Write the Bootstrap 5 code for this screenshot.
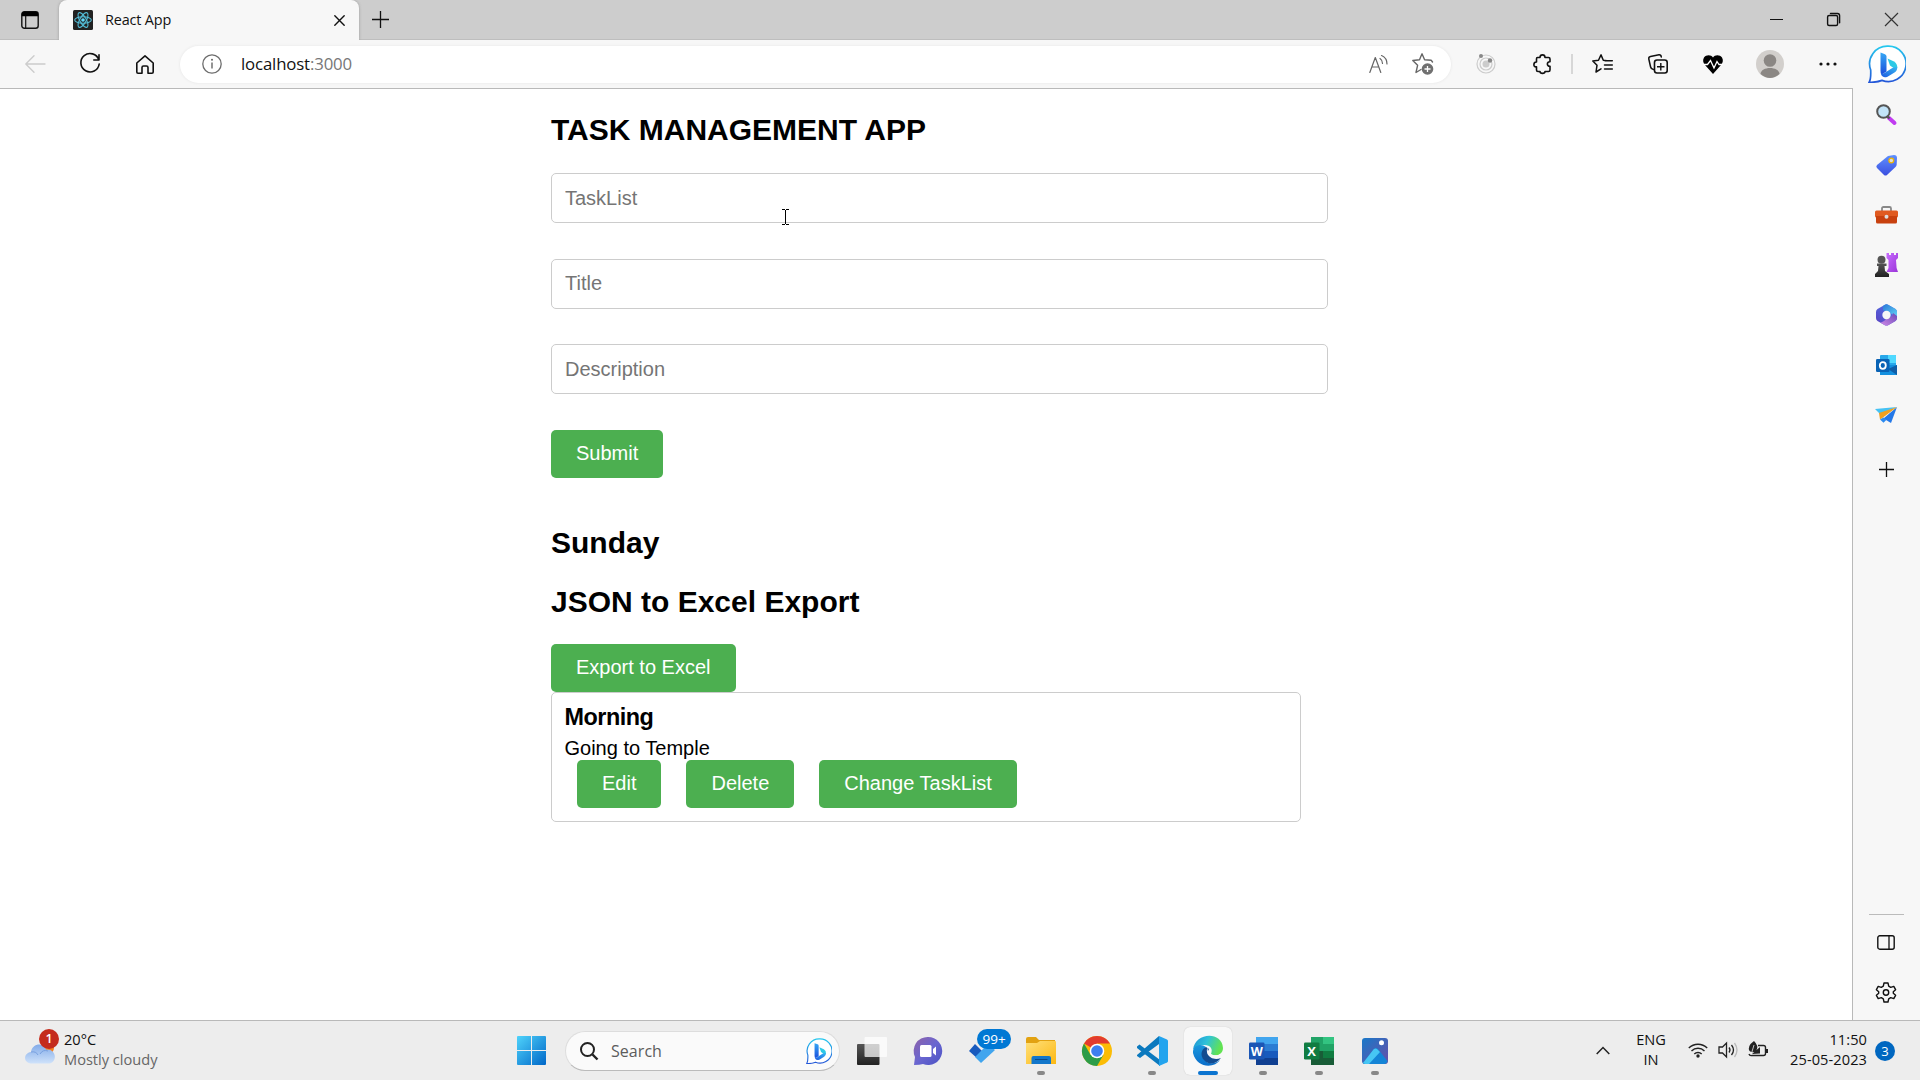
<!DOCTYPE html>
<html lang="en">
<head>
<meta charset="utf-8">
<title>React App</title>
<link href="https://cdn.jsdelivr.net/npm/bootstrap@5.3.0/dist/css/bootstrap.min.css" rel="stylesheet">
<style>
:root{--chrome:#f7f7f7;--line:#b9b9b9}
body{width:1920px;height:1080px;overflow:hidden;font-family:"Open Sans","Noto Sans",sans-serif;color:#111;background:#fff}
svg{display:block;flex:none;overflow:visible}
.cell{display:flex;align-items:center;justify-content:center;flex:none;width:55px}
.ln{fill:none;stroke:#111;stroke-width:1.4;stroke-linecap:round;stroke-linejoin:round}
.strip{height:40px;background:#cdcdcd;border-bottom:1px solid #bebebe}
.strip .cell{height:39px}
.tabbox{width:300px;height:40px;background:var(--chrome);border-radius:8px 8px 0 0;padding-left:14px;box-shadow:0 0 3px #999;clip-path:inset(0 -4px 0 -4px)}
.tabname{font-size:14.4px;letter-spacing:-.15px;margin-left:12px;width:229px;line-height:38px}
.tools{height:48px;background:var(--chrome)}
.addr{width:1271px;height:37px;border-radius:19px;background:#fff;box-shadow:0 0 3px #e4e4e4;padding-left:22px}
.url{font-size:16.8px;letter-spacing:-.15px;margin-left:19px;width:1117px;line-height:36px}
.url span{color:#777}
.pagearea{height:932px}
.viewport{width:1853px;border-top:1px solid var(--line);border-right:1px solid var(--line);background:#fff;padding-left:551px;font-family:"Liberation Sans",Arial,sans-serif;color:#000;font-size:20px;line-height:23px}
.viewport h2{font-size:30px;line-height:34px;font-weight:700;margin:0}
.field{width:777px;height:50px;border:1px solid #ccc;border-radius:5px;padding:0 13px;font-size:20px;color:#000;margin-bottom:35.5px;box-shadow:none;background:#fff}
.field::placeholder{color:#757575}
.btn-task{--bs-btn-color:#fff;--bs-btn-bg:#4caf50;--bs-btn-border-width:0;--bs-btn-border-radius:5px;--bs-btn-hover-bg:#439c47;--bs-btn-hover-color:#fff;font-size:20px;line-height:23px;height:48px;padding:12px 25px 13px;display:block}
.taskitem{width:750px;height:130px;border:1px solid #ccc;border-radius:5px;padding:11px 13px 11px 12.5px}
.taskitem h3{font-size:23.4px;line-height:27px;font-weight:700;margin:0 0 6px;letter-spacing:-.5px}
.rail{width:67px;background:var(--chrome)}
.rail .cell{width:66px;height:50px}
.raildiv{width:35px;height:1px;background:#bbb;margin:0 auto}
.taskbar{height:60px;background:#ededed;border-top:1px solid var(--line)}
.small2{font-size:14.6px;line-height:20px;letter-spacing:-.1px;margin-top:-4px}
.searchbox{width:275px;height:40px;border-radius:20px;background:#fafafa;border:1px solid #ddd;border-bottom-color:#bbb;padding:0 7px 0 14px}
.app{width:55.6px;height:59px;flex:none;display:flex;align-items:center;justify-content:center;position:relative}
.app.run::after{content:"";position:absolute;bottom:5px;width:8px;height:4px;border-radius:2px;background:#888}
.app.cur::before{content:"";position:absolute;width:48px;height:48px;background:#f8f8f8;border-radius:6px;box-shadow:0 0 1px #bbb;z-index:0}
.app.cur::after{width:20px;background:#0b74d0}
.app svg{position:relative}
.pill{position:absolute;background:#0078d4;color:#fff;border-radius:10px;height:20px;width:34px;left:21px;top:8px;font-size:13.5px;line-height:20px;text-align:center}
.pip{background:#c42b1c;color:#fff;border-radius:50%;width:20px;height:20px;position:absolute;left:14px;top:-8px;font-size:12.5px;line-height:20px;text-align:center;font-weight:600}
.note{width:20px;height:20px;border-radius:50%;background:#0067c0;color:#fff;font-size:13px;line-height:20px;text-align:center;margin-left:8px}
.ibeam{position:absolute;left:782px;top:209px}
</style>
<script src="https://cdn.jsdelivr.net/npm/bootstrap@5.3.0/dist/js/bootstrap.bundle.min.js"></script>
</head>
<body class="m-0">
<svg width="0" height="0" class="position-absolute">
<defs>
<linearGradient id="bo" x1="0" y1="0" x2="0" y2="1"><stop offset="0" stop-color="#25c8ee"/><stop offset="1" stop-color="#2356d8"/></linearGradient>
<linearGradient id="bb" x1="0" y1="0" x2="0" y2="1"><stop offset="0" stop-color="#36a8f5"/><stop offset="1" stop-color="#1b50dc"/></linearGradient>
<linearGradient id="bl" x1="0" y1="1" x2="1" y2="0"><stop offset="0" stop-color="#1d58e0"/><stop offset="1" stop-color="#35b8f2"/></linearGradient>
<linearGradient id="win" x1="0" y1="0" x2="1" y2="1"><stop offset="0" stop-color="#4fd3fb"/><stop offset="1" stop-color="#0067c8"/></linearGradient>
<linearGradient id="tag" x1="0" y1="0" x2="0" y2="1"><stop offset="0" stop-color="#5e90ff"/><stop offset="1" stop-color="#3b4fe0"/></linearGradient>
<linearGradient id="cl" x1="0" y1="0" x2="0" y2="1"><stop offset="0" stop-color="#82abe9"/><stop offset="1" stop-color="#cfe2fa"/></linearGradient>
<linearGradient id="fo" x1="0" y1="0" x2="1" y2="1"><stop offset="0" stop-color="#ffe07a"/><stop offset="1" stop-color="#fcb813"/></linearGradient>
<linearGradient id="ch" x1="0" y1="0" x2="1" y2="1"><stop offset="0" stop-color="#8f62a8"/><stop offset=".5" stop-color="#6a66d0"/><stop offset="1" stop-color="#4a52c4"/></linearGradient>
<linearGradient id="eg" x1="0" y1="0" x2="1" y2=".3"><stop offset="0" stop-color="#1c8fd6"/><stop offset=".5" stop-color="#2fc2d8"/><stop offset="1" stop-color="#62e352"/></linearGradient>
<linearGradient id="eb" x1="0" y1="0" x2="0" y2="1"><stop offset="0" stop-color="#1a98dd"/><stop offset="1" stop-color="#0a6dc9"/></linearGradient>
<linearGradient id="ph" x1="0" y1="0" x2="1" y2="1"><stop offset="0" stop-color="#1878c8"/><stop offset="1" stop-color="#6a4fa8"/></linearGradient>
<linearGradient id="dk" x1="0" y1="0" x2="0" y2="1"><stop offset="0" stop-color="#555"/><stop offset="1" stop-color="#222"/></linearGradient>
<linearGradient id="pk" x1="0" y1="0" x2="1" y2="1"><stop offset="0" stop-color="#c86cff"/><stop offset="1" stop-color="#9b35d8"/></linearGradient>
<linearGradient id="ma" x1="0" y1="1" x2="1" y2="0"><stop offset="0" stop-color="#5a3fc0"/><stop offset="1" stop-color="#4d7ff0"/></linearGradient>
<linearGradient id="mb" x1="0" y1="0" x2="1" y2="1"><stop offset="0" stop-color="#2b7ad8"/><stop offset="1" stop-color="#62d4f5"/></linearGradient>
<linearGradient id="mc" x1="0" y1="1" x2="1" y2="0"><stop offset="0" stop-color="#cf88e6"/><stop offset="1" stop-color="#6a49b8"/></linearGradient>
<symbol id="bing" viewBox="0 0 38 38">
<path d="M20 1.200A17.700 17.700 0 1 1 14 35.400C10 37 5 37.400 1.200 37.200 3 34 2.900 30 2.700 25A17.700 17.700 0 0 1 20 1.200Z" fill="#fff" stroke="url(#bo)" stroke-width="1.700"/>
<path d="M19.500 13.500L26 16.500Q29.500 18.500 29.300 23L27 24 22 20.500Z" fill="#2cc9e6"/>
<path d="M12.500 26C13 29 16 29 18 27L23.500 23.500Q26 21.500 29.200 22Q29.500 25.500 26.500 27.500L19.500 31.700Q13 34 12.500 26Z" fill="url(#bl)"/>
<path d="M12.500 7.500L17 9.300Q18.500 10 18.500 11.500V26.500L14.500 29Q12.500 28.500 12.500 26Z" fill="url(#bb)"/>
</symbol>
</defs>
</svg>

<div class="strip d-flex">
  <div class="cell" style="width:59px"><svg width="18" height="18" viewBox="0 0 18 18" style="margin-left:1px"><rect class="ln" x=".8" y=".8" width="16.400" height="16.400" rx="2.500"/><path d="M.8 5.200V3Q.8.800 3 .8H15Q17.200.800 17.200 3V5.200Z"/><path d="M4.700 5v12" stroke="#111" stroke-width="1.200"/></svg></div>
  <div class="tabbox d-flex align-items-center">
    <svg width="20" height="20" viewBox="0 0 20 20"><rect width="20" height="20" rx="1.500" fill="#222"/><g fill="none" stroke="#53bcd6" stroke-width="1.100"><ellipse cx="10" cy="10" rx="8.300" ry="3.200"/><ellipse cx="10" cy="10" rx="8.300" ry="3.200" transform="rotate(60 10 10)"/><ellipse cx="10" cy="10" rx="8.300" ry="3.200" transform="rotate(120 10 10)"/></g><circle cx="10" cy="10" r="1.800" fill="#61dafb"/></svg>
    <div class="tabname">React App</div>
    <svg width="11" height="11" viewBox="0 0 11 11"><path class="ln" d="M.8.800l9.400 9.400M10.200.800L.8 10.200"/></svg>
  </div>
  <div class="cell" style="width:43px"><svg width="17" height="17"><path d="M8.500 0v17M0 8.500h17" stroke="#111" stroke-width="1.300"/></svg></div>
  <div class="ms-auto d-flex">
    <div class="cell" style="width:56px"><svg width="13" height="13"><path d="M0 6.500h13" stroke="#111"/></svg></div>
    <div class="cell" style="width:58px"><svg width="13" height="13" viewBox="0 0 13 13" class="ln"><rect x=".6" y="2.500" width="10" height="10" rx="1.500"/><path d="M3.500.500h7Q12.600.500 12.600 2.800v7"/></svg></div>
    <div class="cell" style="width:58px"><svg width="13" height="13"><path d="M0 0l13 13M13 0L0 13" stroke="#333" stroke-width="1.200"/></svg></div>
  </div>
</div>

<div class="tools d-flex align-items-center">
  <div class="cell" style="width:70px"><svg width="20" height="18" style="margin-right:1px"><path class="ln" d="M20 9H1M9 .8L.8 9 9 17.200" style="stroke:#ccc"/></svg></div>
  <div class="cell" style="width:40px"><svg width="20" height="20"><path class="ln" style="stroke-width:1.600" d="M18.800 5.800A9.200 9.200 0 1 0 19.200 10M19 .8V6h-5.200"/></svg></div>
  <div class="cell" style="width:70px"><svg width="18" height="19"><path class="ln" style="stroke-width:1.600" d="M.8 8L9 .800 17.200 8V17Q17.200 18.200 16 18.200H12V12.500Q12 11 10.500 11H7.500Q6 11 6 12.500V18.200H2Q.8 18.200.8 17Z"/></svg></div>
  <div class="addr d-flex align-items-center">
    <svg width="20" height="20"><circle cx="10" cy="10" r="9.200" fill="none" stroke="#6d6d6d" stroke-width="1.300"/><path d="M10 8.500v6" stroke="#666" stroke-width="1.400"/><circle cx="10" cy="5.800" r="1" fill="#666"/></svg>
    <div class="url">localhost<span>:3000</span></div>
    <div class="cell" style="width:40px"><svg width="19" height="18"><path d="M.8 17.500L6.300 2.500 11.800 17.500M2.800 12h7M11 3.500c1.500 1 2.500 2.500 2.500 5M12.500 .5C16 2 18 5 18 9" class="ln" style="stroke:#666;stroke-width:1.200"/></svg></div>
    <div class="cell" style="width:50px"><svg width="22" height="22" viewBox="0 0 22 22"><path d="M20.500 9L19.300 7.300 12.600 6.800 10 .8 7.500 6.800.8 7.500 5.600 12.300 4 19.500 9 16.500" class="ln" style="stroke:#666"/><circle cx="15.500" cy="16" r="5.800" fill="#707070"/><path d="M15.500 13v6M12.500 16h6" stroke="#fff" stroke-width="1.300"/></svg></div>
  </div>
  <div class="cell" style="width:70px"><svg width="20" height="20"><g fill="none" stroke="#ccc" stroke-width="1.200"><circle cx="10" cy="10" r="9"/><circle cx="10" cy="10" r="6"/></g><circle cx="10" cy="10" r="3.500" fill="#ccc"/><circle cx="5" cy="2" r="2" fill="#888"/><circle cx="14" cy="6.500" r="2.200" fill="#888"/></svg></div>
  <div class="cell" style="width:42px"><svg width="18" height="20" viewBox="0 0 18 20" style="margin-right:1px"><path class="ln" style="stroke-width:1.600" d="M4.500 3.500H7C7 0 12 0 12 3.500H15.500Q17 3.500 17 5V7.800C13.500 7.300 13.500 12.600 17 12.200V16Q17 17.500 15.500 17.500H12C12 20 7 20 7 17.500H5Q3.500 17.500 3.500 16V12.800C0 13.500 0 8 3.500 8V5Q3.500 3.500 4.500 3.500Z"/></svg></div>
  <div class="cell" style="width:18px"><svg width="2" height="20"><path d="M1 0v20" stroke="#ccc" stroke-width="1.500"/></svg></div>
  <div class="cell" style="width:44px"><svg width="21" height="20" viewBox="0 0 21 20" style="margin-right:1px"><path class="ln" style="stroke-width:1.500" d="M15 6.700L11.300 6.300 9 .9 6.500 6.300.8 7 5 11.300 4 18 9 14.800M13 6.700h7.300M12.500 11h7.800M12.500 15h7.800"/></svg></div>
  <div class="cell" style="width:66px"><svg width="20" height="20" viewBox="0 0 20 20"><path class="ln" style="stroke-width:1.500" d="M5.500 15.500Q3 15 2.600 13L.8 5Q.5 3 2.500 2.600L11 .8Q13 .6 13.300 3"/><rect class="ln" style="stroke-width:1.600" x="6.500" y="6" width="12.700" height="13" rx="2.500"/><path d="M12.800 9v7.500M9 12.700h7.500" stroke="#111" stroke-width="1.400"/></svg></div>
  <div class="cell" style="width:44px"><svg width="20" height="18" viewBox="0 0 20 18"><path d="M10 2.500C12-.8 17-.4 19 2.500 20.500 5 20 7.500 18 10L10 19 2 10C0 7.500-.5 5 1 2.500 3-.4 8-.8 10 2.500Z"/><path d="M0 9.500h4.500l3-4 3.500 7.500 3-6.500 2 3h4" fill="none" stroke="#fff" stroke-width="1.300"/></svg></div>
  <div class="cell" style="width:70px"><svg width="28" height="28"><circle cx="14" cy="14" r="14" fill="#d2cfcc"/><circle cx="14" cy="10.500" r="6.300" fill="#8b8784"/><path d="M4.500 24C5 16 23 16 23.500 24Q14 32 4.500 24Z" fill="#8b8784"/></svg></div>
  <div class="cell" style="width:45px"><svg width="18" height="4"><g fill="#111"><circle cx="2" cy="2" r="1.600"/><circle cx="9" cy="2" r="1.600"/><circle cx="16" cy="2" r="1.600"/></g></svg></div>
  <div class="cell ms-auto" style="width:67px"><svg width="38" height="38"><use href="#bing"/></svg></div>
</div>

<div class="pagearea d-flex">
  <main class="viewport">
    <h2 style="margin-top:24px;margin-bottom:26px">TASK MANAGEMENT APP</h2>
    <form>
      <input class="form-control field" placeholder="TaskList">
      <input class="form-control field" placeholder="Title">
      <input class="form-control field" placeholder="Description">
      <button type="button" class="btn btn-task">Submit</button>
    </form>
    <h2 style="margin-top:48px;margin-bottom:25px">Sunday</h2>
    <h2 style="margin-bottom:25px">JSON to Excel Export</h2>
    <button type="button" class="btn btn-task">Export to Excel</button>
    <div class="taskitem">
      <h3>Morning</h3>
      <div>Going to Temple</div>
      <div class="d-flex" style="gap:25px;padding-left:12.5px">
        <button type="button" class="btn btn-task">Edit</button>
        <button type="button" class="btn btn-task">Delete</button>
        <button type="button" class="btn btn-task">Change TaskList</button>
      </div>
    </div>
  </main>
  <aside class="rail d-flex flex-column">
    <div class="cell" style="height:51px;margin-top:1px"><svg width="20" height="21" viewBox="0 0 20 21"><path d="M13 14l5.500 5" stroke="#c03cf0" stroke-width="4" stroke-linecap="round"/><path d="M11.500 12.500l2 2" stroke="#555" stroke-width="2"/><circle cx="7.500" cy="7.500" r="6.300" fill="#c2e3f8" stroke="#555" stroke-width="2"/></svg></div>
    <div class="cell"><svg width="21" height="21" viewBox="0 0 21 21"><path d="M12 1l6-1Q21 0 21 3l-.3 6.500Q20.500 11 19.500 12L11 20Q9.500 21 8 20L1 13Q-.4 11.500 1 10Z" fill="url(#tag)"/><circle cx="15.300" cy="5.500" r="2.400" fill="#ddd" stroke="#f0b400" stroke-width="1.300"/></svg></div>
    <div class="cell"><svg width="23" height="18" viewBox="0 0 23 18"><path d="M7 5V2.500Q7 1 8.500 1H14.500Q16 1 16 2.500V5" fill="none" stroke="#888" stroke-width="1.800"/><rect x="0" y="4.500" width="23" height="7" rx="1.500" fill="#e05a20"/><path d="M1 10h21v6q0 1.500-1.500 1.500h-18Q1 17.500 1 16z" fill="#c8410f"/><circle cx="11.500" cy="10.700" r="2" fill="#ddd"/></svg></div>
    <div class="cell"><svg width="23" height="24" viewBox="0 0 23 24"><path d="M11.500 0h2.500v2h2V0h3v2h2V0H23v5l-2 2 .6 8 1.400 4H11.500l2-4V7l-2-2z" fill="url(#pk)"/><circle cx="6.500" cy="6.800" r="4" fill="#555"/><path d="M2 10.500h9.500v2.500H9.500l.5 5 4 3v3H0v-3l3-3 .5-5H2z" fill="url(#dk)"/></svg></div>
    <div class="cell"><svg width="21" height="22" viewBox="0 0 21 22"><path d="M8.500 1Q10.500-.3 12.500 1l7 4Q21 6 21 8v6Q21 16 19.500 17l-7 4q-2 1-4 0l-7-4Q0 16 0 14V8Q0 6 1.500 5z" fill="url(#ma)"/><path d="M7 2L8.500 1Q10.500-.3 12.500 1l7 4Q21 6 21 8v5L14 9 7 6z" fill="url(#mb)"/><path d="M21 12v2Q21 16 19.500 17l-7 4q-2 1-4 0L4.500 18.700Q8 18 10 15l6-3 1-3z" fill="url(#mc)"/><circle cx="10.500" cy="11" r="4.200" fill="#f7f7f7"/></svg></div>
    <div class="cell"><svg width="21" height="20" viewBox="0 0 21 20"><rect x="4" width="16" height="17" rx="1" fill="#28a8ea"/><path d="M12 0h7q1 0 1 1v7h-8z" fill="#50d9ff"/><path d="M4 10h17v10H4z" fill="#1490df"/><path d="M21 10v10l-9-6z" fill="#0f5ea8"/><rect y="4" width="13.500" height="13" rx="1.300" fill="#0a63b5"/><ellipse cx="6.800" cy="10.500" rx="3" ry="3.300" fill="none" stroke="#fff" stroke-width="1.800"/></svg></div>
    <div class="cell"><svg width="22" height="16" viewBox="0 0 22 16"><path d="M0 2L22 0 5 7z" fill="#45c2f4"/><path d="M22 0L16 16 8.500 11.500z" fill="#2478e8"/><path d="M22 0L4 6l1 6.500 3-2z" fill="#f0a020"/><path d="M5 12.500l3.500-2 3 2.200-3 3z" fill="#2b8af0"/></svg></div>
    <div class="cell" style="height:58px"><svg width="15" height="15"><path d="M7.500 0v15M0 7.500h15" stroke="#111" stroke-width="1.300"/></svg></div>
    <div class="raildiv mt-auto"></div>
    <div class="cell" style="height:55px"><svg width="18" height="15"><rect class="ln" x=".8" y=".8" width="16.400" height="13.400" rx="2"/><path d="M12 .8v13.400" stroke="#111" stroke-width="1.300"/></svg></div>
    <div class="cell" style="margin-bottom:5px;height:45px"><svg width="20" height="21" viewBox="0 0 20 21"><path class="ln" d="M8 1h4l.7 3.200 2 1.200L17.800 4.400l1.800 3.300-2.300 2v1.600l2.300 2-1.800 3.300-3.100-1-2 1.200L12 20H8l-.7-3.200-2-1.200-3.100 1L.4 13.300l2.300-2V9.700L.4 7.700 2.200 4.400l3.100 1 2-1.200Z"/><circle class="ln" cx="10" cy="10.500" r="2.700"/></svg></div>
  </aside>
</div>

<footer class="taskbar d-flex align-items-center">
  <div class="d-flex align-items-center" style="width:504px;padding-left:25px">
    <div class="position-relative"><svg width="30" height="25" viewBox="0 0 30 25" style="margin-top:2px"><circle cx="23" cy="9" r="6" fill="#f58220"/><path d="M7 24.500C-2 24.500-2 14 6 13 7 4 19 3 21 10.500c11-1 12 14 2 14z" fill="url(#cl)"/><path d="M6 13q5-1 7 3M15 15q3-5 8-3" fill="none" stroke="#78a0df" stroke-width="1"/></svg><span class="pip">1</span></div>
    <div class="small2" style="margin-left:9px;letter-spacing:0"><div>20°C</div><div style="color:#666">Mostly cloudy</div></div>
  </div>
  <div class="cell" style="width:55px"><svg width="29" height="29"><path d="M0 1Q0 0 1 0H14V14H0zM15 0H28Q29 0 29 1V14H15zM0 15H14V29H1Q0 29 0 28zM15 15H29V28Q29 29 28 29H15z" fill="url(#win)"/></svg></div>
  <div class="searchbox d-flex align-items-center" style="margin-left:6px">
    <svg width="18" height="18"><circle cx="7.500" cy="7.500" r="6.500" fill="none" stroke="#222" stroke-width="2"/><path d="M12.500 12.500l5 5" stroke="#222" stroke-width="2.400"/></svg>
    <span style="font-size:16px;color:#5c5c5c;margin-left:13px;letter-spacing:.05px;line-height:38px">Search</span>
    <svg class="ms-auto" width="26" height="26"><use href="#bing"/></svg>
  </div>
  <div class="app" style="margin-left:4px"><svg width="30" height="28" viewBox="0 0 30 28"><rect y="7" width="22.500" height="21" rx="1" fill="url(#dk)"/><rect x="7.500" width="22.500" height="20" rx="1" fill="#fff" fill-opacity=".72"/></svg></div>
  <div class="app" style="margin-left:1px"><svg width="28" height="28" viewBox="0 0 28 28"><path d="M14 0a14 14 0 1 1-5 27Q6 28 0 28L1 20A14 14 0 0 1 14 0z" fill="url(#ch)"/><rect x="6" y="8" width="11.500" height="12" rx="1.500" fill="#fff"/><path d="M19 12l3-2.500v9L19 16z" fill="#fff"/></svg></div>
  <div class="app"><svg width="26" height="20" viewBox="0 0 26 20" style="left:-2px;top:2px"><path d="M0 8l6-7 8 8-5 7z" fill="#185abd"/><path d="M6 14L19 1l7 6-14 13z" fill="#41a5ee"/></svg><span class="pill">99+</span></div>
  <div class="app run" style="margin-left:1.500px"><svg width="30" height="27" viewBox="0 0 30 27"><path d="M0 2Q0 0 2 0H10L13 3H29V9H0z" fill="#e2a211"/><path d="M0 6H11L14 4H29Q30 4 30 5V27H0z" fill="url(#fo)"/><path d="M5.500 27V21Q5.500 19 7.500 19H23Q25 19 25 21V27z" fill="#1276ca"/><path d="M9 22.500h12.500" stroke="#0a4a8a"/></svg></div>
  <div class="app"><svg width="30" height="30" viewBox="0 0 30 30"><circle cx="15" cy="15" r="15" fill="#fbbc05"/><path d="M15 15L2 7.500A15 15 0 0 1 28 7.500H15z" fill="#e33b2e"/><path d="M2 7.500A15 15 0 0 0 15 30L21.500 18.700 8.500 18.700z" fill="#2c9c48"/><circle cx="15" cy="15" r="7.300" fill="#fff"/><circle cx="15" cy="15" r="5.800" fill="#3d7ff0"/></svg></div>
  <div class="app run"><svg width="31" height="30" viewBox="0 0 31 30"><path d="M0 10.500L2.500 8.500 23 24v6L0 12zM0 19L22 0v8L3 22 0 20z" fill="#0b79be"/><path d="M22 0l8 3.500q1 .5 1 1.500v20q0 1-1 1.500L22 30z" fill="#23a4ee"/></svg></div>
  <div class="app run cur"><svg width="30" height="30" viewBox="0 0 30 30"><path d="M0 14C2-4 29-5 30 12c0 7-8 9-12 6 2-5 0-9-7-9-5 0-10 3-11 5z" fill="url(#eg)"/><path d="M0 15c1-6 8-8 13-4-4 3-5 8-2 12 3 5 10 6 16 1C22 32 4 33 0 17z" fill="url(#eb)"/><path d="M13 11c-5 2-6 9-2 13 4 5 11 5 17-2-5 2-12 1-13-5-.5-2 .5-3 1-4z" fill="#124c91"/><path d="M15 11c-1 3 0 7 5 8 3 .6 6 0 8-1-3 6-14 4-14-2-.5-2 .2-4 1-5z" fill="#f8f8f8"/></svg></div>
  <div class="app run"><svg width="29" height="28" viewBox="0 0 29 28"><rect x="7" width="22" height="28" fill="#185abd"/><path d="M7 0h22v7H7z" fill="#41a5ee"/><path d="M7 7h22v7H7z" fill="#2b7cd3"/><path d="M7 21h22v7H7z" fill="#103f91"/><rect y="5.500" width="15.500" height="17" rx="1.300" fill="#1b56b5"/><text x="7.700" y="18.500" text-anchor="middle" font-size="12.500" font-weight="700" fill="#fff" font-family="Open Sans">W</text></svg></div>
  <div class="app run"><svg width="30" height="28" viewBox="0 0 30 28"><rect x="7" width="23" height="28" fill="#185c37"/><path d="M7 0h12v14H7z" fill="#21a366"/><path d="M19 0h11v7H19z" fill="#33c481"/><path d="M19 7h11v7H19z" fill="#21a366"/><path d="M19 14h11v7H19z" fill="#107c41"/><rect y="5.500" width="15.500" height="17" rx="1.300" fill="#107c41"/><text x="7.700" y="18.500" text-anchor="middle" font-size="13" font-weight="700" fill="#fff" font-family="Open Sans">X</text></svg></div>
  <div class="app run"><svg width="26" height="26" viewBox="0 0 26 26"><rect width="26" height="26" rx="3" fill="url(#ph)"/><path d="M1 25L12 11q2-2 4 0l9.500 12Q25 26 22 26H3Q1.500 26 1 25z" fill="#1484d6"/><path d="M1 25L11.500 11.500q2-2 4 0L18 14 7 26H3z" fill="#46c6f4"/><circle cx="19.500" cy="4.800" r="2.500" fill="#fff"/></svg></div>
  <div class="ms-auto d-flex align-items-center" style="padding-right:25px">
    <svg width="14" height="9" viewBox="0 0 14 9"><path d="M.7 8L7 1.500 13.300 8" fill="none" stroke="#222" stroke-width="1.500"/></svg>
    <div class="small2 text-center" style="width:82px;margin-top:-3px"><div>ENG</div><div>IN</div></div>
    <svg width="20" height="16" viewBox="0 0 20 16" style="margin-right:10px;margin-left:-4px;margin-top:-2px"><path d="M.8 6a13 13 0 0 1 18.400 0M3.500 9a9.200 9.200 0 0 1 13 0M6.300 12a5.300 5.300 0 0 1 7.400 0" fill="none" stroke="#222" stroke-width="1.400"/><circle cx="10" cy="14" r="1.700" fill="#222"/></svg>
    <svg width="20" height="16" viewBox="0 0 20 16" style="margin-right:10px;margin-top:-1px"><path d="M1 5h3.500L8.500 1v14l-4-4H1z" fill="none" stroke="#222" stroke-width="1.300"/><path d="M11 5.500q2 2.500 0 5M13.500 3q4 5 0 10" fill="none" stroke="#222" stroke-width="1.300"/><path d="M16.500 1q5 7 0 14" fill="none" stroke="#bbb" stroke-width="1.300"/></svg>
    <svg width="20" height="16" viewBox="0 0 20 16" style="margin-top:-3px"><path d="M10 4.500h5.500q2 0 2 2v6q0 2-2 2H3q-1.500 0-2-1.500" fill="none" stroke="#222" stroke-width="1.400"/><path d="M18 8h2v4h-2zM6 0q5 5 2.500 9Q6 13 1.500 10-1 5 6 0zM4 13l8-7v6.500z" fill="#222"/><path d="M6 4L3 14" stroke="#eee" stroke-width=".8"/></svg>
    <div class="small2 text-end" style="width:99px;letter-spacing:.08px"><div>11:50</div><div>25-05-2023</div></div>
    <div class="note">3</div>
  </div>
</footer>
<svg class="ibeam" width="7" height="16"><path d="M0 .5h3M4 .5h3M3.500 1v14M0 15.500h3M4 15.500h3" stroke="#000" fill="none"/></svg>
</body>
</html>
